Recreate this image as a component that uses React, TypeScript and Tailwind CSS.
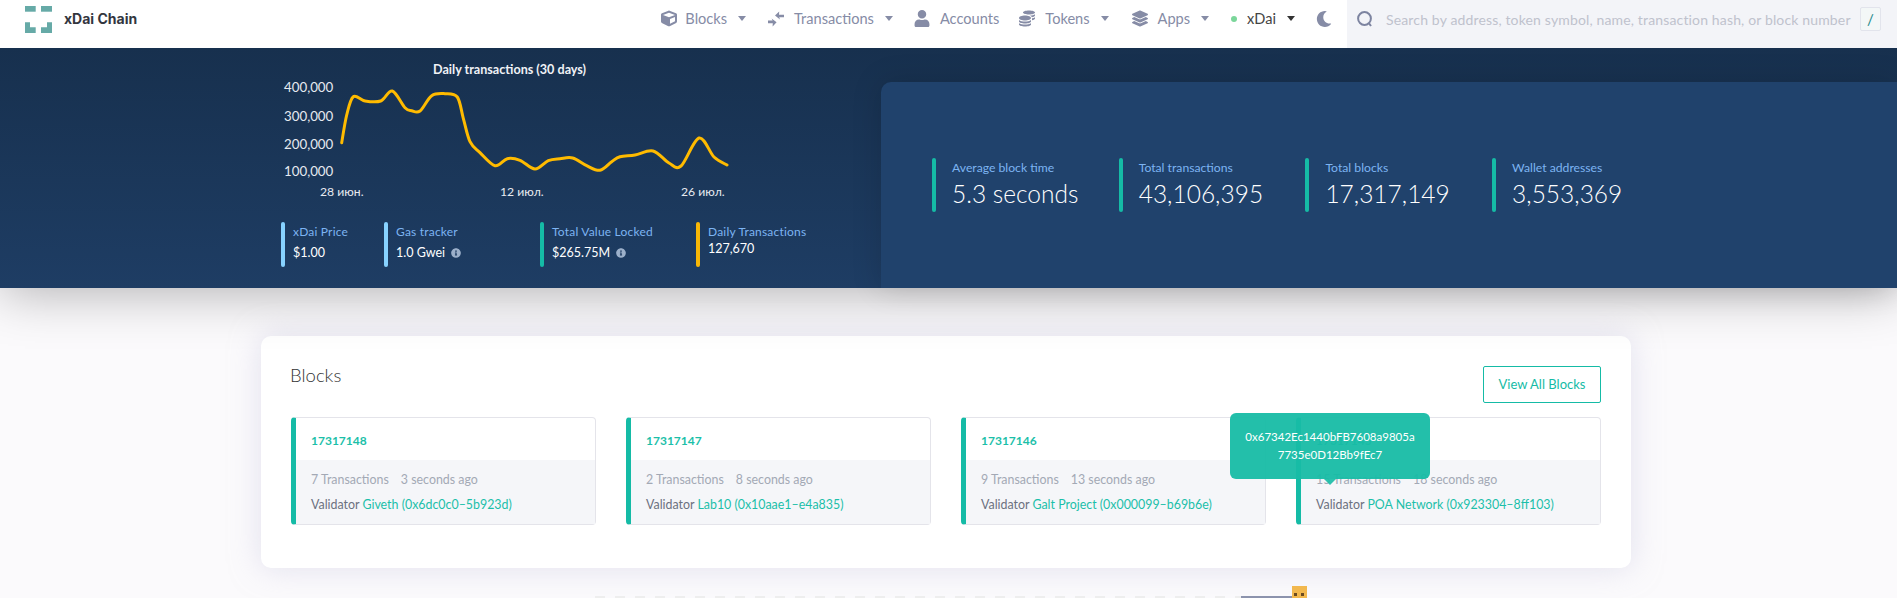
import React from 'react';
import { FaCube, FaUser, FaCoins, FaLayerGroup, FaMoon, FaInfoCircle } from 'react-icons/fa';

const chartPoints: [number, number][] = [
  [341.7, 142.7], [346.7, 115], [353.3, 96.7], [365, 101], [380.7, 101], [392.3, 91], [405, 107.7],
  [411.7, 110.7], [420, 111], [431.7, 95.7], [445, 93.7], [457.3, 97], [463.3, 118.3], [470, 141.7],
  [480, 152.7], [495, 165.7], [507.3, 158.7], [520, 160.3], [535, 169], [548.3, 160.7], [560, 158.7],
  [572.7, 158], [586.7, 165.7], [600, 170.3], [611.7, 161.7], [620, 156.7], [635, 155], [653, 151],
  [669, 163], [681, 166], [699, 138], [714, 157], [727, 165],
];

function smoothPath(pts: [number, number][]) {
  let d = `M${pts[0][0]} ${pts[0][1]}`;
  for (let i = 0; i < pts.length - 1; i++) {
    const p0 = pts[i - 1] || pts[i];
    const p1 = pts[i];
    const p2 = pts[i + 1];
    const p3 = pts[i + 2] || p2;
    const c1x = p1[0] + (p2[0] - p0[0]) / 6;
    const c1y = p1[1] + (p2[1] - p0[1]) / 6;
    const c2x = p2[0] - (p3[0] - p1[0]) / 6;
    const c2y = p2[1] - (p3[1] - p1[1]) / 6;
    d += ` C${c1x} ${c1y} ${c2x} ${c2y} ${p2[0]} ${p2[1]}`;
  }
  return d;
}

function Caret({ dark }: { dark?: boolean }) {
  return (
    <span className={`inline-block w-0 h-0 border-x-[4px] border-x-transparent border-t-[5px] ${dark ? 'border-t-[#333]' : 'border-t-[#868ca6]'}`} />
  );
}

function TransferIcon() {
  return (
    <svg viewBox="0 0 16 16" className="w-[16px] h-[16px]" fill="#868ca6">
      <path d="M0 9.6h4.6L3.6 7.4l5 3.8-4 4.2.2-3.1H0z" />
      <path d="M16 6.2h-4.8l.8 2.2-5-3.8L11.2.6 11 3.7h5z" />
    </svg>
  );
}

function NavItem({ icon, label, caret, className }: { icon: React.ReactNode; label: string; caret?: boolean; className?: string }) {
  return (
    <div className={`flex items-center ${className || ''}`}>
      {icon}
      <span className="ml-[10px] text-[14.6px] text-[#868ca6]">{label}</span>
      {caret && <span className="ml-[11px] flex"><Caret /></span>}
    </div>
  );
}

function Logo() {
  return (
    <svg viewBox="0 0 27 27" className="w-[27px] h-[27px]" fill="#66aaa7">
      <rect x="0" y="0" width="10.7" height="5.7" />
      <rect x="16" y="0" width="11" height="5.7" />
      <path d="M0 16.3h5v5h5.7v5.7H0z" />
      <path d="M27 16.3h-5v5h-6v5.7h11z" />
    </svg>
  );
}

function Tile({ color, label, value, info, raise, className }: { color: string; label: string; value: string; info?: boolean; raise?: boolean; className: string }) {
  return (
    <div className={`flex h-[45px] ${className}`}>
      <div className={`w-[4px] rounded-sm ${color}`} />
      <div className="ml-[8px]">
        <div className="text-[12px] leading-[20px] text-[#7db4f2] tracking-[0.2px]">{label}</div>
        <div className={`${raise ? 'mt-[-3px]' : 'mt-[1px]'} flex items-center text-[12.5px] leading-[20px] text-white`}>
          {value}
          {info && <FaInfoCircle className="ml-[6px] w-[10px] h-[10px] text-[#9cb0ca]" />}
        </div>
      </div>
    </div>
  );
}

function Stat({ label, value }: { label: string; value: string }) {
  return (
    <div className="flex w-[186.7px] h-[54px] shrink-0">
      <div className="w-[4px] rounded-sm bg-[#15bba6]" />
      <div className="ml-[16px]">
        <div className="text-[12.2px] leading-[18px] mt-[1px] text-[#7db4f2]">{label}</div>
        <div className="mt-[2px] text-[24.5px] leading-[30px] font-light text-white">{value}</div>
      </div>
    </div>
  );
}

const blocks = [
  { n: '17317148', tx: '7 Transactions', age: '3 seconds ago', v: 'Giveth (0x6dc0c0–5b923d)' },
  { n: '17317147', tx: '2 Transactions', age: '8 seconds ago', v: 'Lab10 (0x10aae1–e4a835)' },
  { n: '17317146', tx: '9 Transactions', age: '13 seconds ago', v: 'Galt Project (0x000099–b69b6e)' },
  { n: '17317145', tx: '15 Transactions', age: '18 seconds ago', v: 'POA Network (0x923304–8ff103)' },
];

function BlockCard({ block, tooltip }: { block: (typeof blocks)[number]; tooltip?: boolean }) {
  return (
    <div className="relative w-[305px] h-[108px] rounded-[4px] border border-[#e4e4ea] border-l-[5px] border-l-[#15bba6]">
      <div className="h-[42px] pl-[15px] pt-[4px] flex items-center text-[12px] font-bold text-[#1cbfa9]">{block.n}</div>
      <div className="h-[64px] bg-[#f5f6f9] pl-[15px] pt-[10px] text-[12.4px]">
        <div className="leading-[20px] text-[#a3a9b5]">
          <span>{block.tx}</span>
          <span className="ml-[12px]">{block.age}</span>
        </div>
        <div className="mt-[5px] leading-[20px] text-[#6c7180]">
          Validator <span className="text-[#1cbfa9]">{block.v}</span>
        </div>
      </div>
      {tooltip && (
        <div className="absolute left-[-71px] top-[-5px] w-[200px] h-[66px] rounded-[6px] bg-[#17bca5]/95 flex items-center justify-center text-center text-[11.5px] leading-[18px] text-white">
          <div>0x67342Ec1440bFB7608a9805a<br />7735e0D12Bb9fEc7</div>
          <span className="absolute left-[94px] top-[66px] w-0 h-0 border-x-[6px] border-x-transparent border-t-[6px] border-t-[#17bca5]/90" />
        </div>
      )}
    </div>
  );
}

export default function App() {
  return (
    <div className="h-[598px] overflow-hidden bg-[#fbfafc] font-['Lato',sans-serif]">
      <header className="relative z-10 h-[48px] bg-white flex items-center">
        <div className="ml-[25px] mt-[-9px] flex items-center">
          <Logo />
          <span className="ml-[12px] mt-[-3px] text-[14px] font-bold font-['Inter',sans-serif] text-[#33363f]">xDai Chain</span>
        </div>
        <nav className="ml-auto flex items-center mt-[-10px]">
          <NavItem icon={<FaCube className="w-[16px] h-[17px] mr-[-2px] text-[#868ca6]" />} label="Blocks" caret />
          <NavItem icon={<TransferIcon />} label="Transactions" caret className="ml-[22px]" />
          <NavItem icon={<FaUser className="w-[16px] h-[17px] text-[#868ca6]" />} label="Accounts" className="ml-[21px]" />
          <NavItem icon={<FaCoins className="w-[16px] h-[17px] text-[#868ca6]" />} label="Tokens" caret className="ml-[20px]" />
          <NavItem icon={<FaLayerGroup className="w-[16px] h-[17px] text-[#868ca6]" />} label="Apps" caret className="ml-[23px]" />
          <div className="ml-[22px] flex items-center">
            <span className="w-[6px] h-[6px] rounded-full bg-[#7bd69a]" />
            <span className="ml-[10px] text-[14.6px] text-[#444]">xDai</span>
            <span className="ml-[11px] flex"><Caret dark /></span>
          </div>
          <FaMoon className="ml-[21px] w-[16px] h-[16px] text-[#868ca6]" />
        </nav>
        <div className="ml-[15px] w-[550px] h-full bg-[#f3f4f8] flex items-center pl-[10px] pb-[10px]">
          <svg viewBox="0 0 16 16" className="w-[16px] h-[16px]" fill="none" stroke="#7d84a0" strokeWidth="2">
            <circle cx="7.5" cy="7.5" r="6.4" />
            <path d="M11.8 12l2.2 3" />
          </svg>
          <span className="ml-[13px] text-[14px] text-[#bfc2cd] tracking-[0.15px] whitespace-nowrap">Search by address, token symbol, name, transaction hash, or block number</span>
          <span className="absolute left-[1860px] top-[7px] w-[21px] h-[24px] flex items-center justify-center rounded-[2px] border border-[#e2e4ec] bg-[#f3f7f7] text-[15px] text-[#1f8a8a]">/</span>
        </div>
      </header>

      <section className="h-[240px] flex bg-gradient-to-b from-[#17304e] to-[#1e3d64] shadow-[0_4px_50px_rgba(0,0,0,0.3)] relative">
        <div className="w-[881px] shrink-0 pl-[275px] pt-[2px]">
          <svg viewBox="275 50 460 152" className="w-[460px] h-[152px] block">
            <text x="433" y="74" fontSize="12.6" fontWeight="700" fill="#f0f2f6">Daily transactions (30 days)</text>
            <text x="284" y="92" fontSize="13.3" fill="#e6eaf0">400,000</text>
            <text x="284" y="121" fontSize="13.3" fill="#e6eaf0">300,000</text>
            <text x="284" y="149" fontSize="13.3" fill="#e6eaf0">200,000</text>
            <text x="284" y="176" fontSize="13.3" fill="#e6eaf0">100,000</text>
            <text x="320" y="196" fontSize="12.2" fill="#e6eaf0">28 июн.</text>
            <text x="500" y="196" fontSize="12.2" fill="#e6eaf0">12 июл.</text>
            <text x="681" y="196" fontSize="12.2" fill="#e6eaf0">26 июл.</text>
            <path d={smoothPath(chartPoints)} fill="none" stroke="#ffbb00" strokeWidth="3" strokeLinecap="round" />
          </svg>
          <div className="mt-[20px] ml-[6px] flex">
            <Tile color="bg-[#87d2ff]" label="xDai Price" value="$1.00" className="w-[103px]" />
            <Tile color="bg-[#87d2ff]" label="Gas tracker" value="1.0 Gwei" info className="w-[156px]" />
            <Tile color="bg-[#15bba6]" label="Total Value Locked" value="$265.75M" info className="w-[156px]" />
            <Tile color="bg-[#f8b706]" label="Daily Transactions" value="127,670" raise className="w-[160px]" />
          </div>
        </div>
        <div className="flex-1 mt-[34px] rounded-tl-[10px] bg-[#20426c] shadow-[0_0_30px_rgba(0,0,0,0.15)] pl-[51px] flex items-center">
          <Stat label="Average block time" value="5.3 seconds" />
          <Stat label="Total transactions" value="43,106,395" />
          <Stat label="Total blocks" value="17,317,149" />
          <Stat label="Wallet addresses" value="3,553,369" />
        </div>
      </section>

      <main className="pt-[48px] pl-[261px]">
        <div className="w-[1370px] h-[232px] rounded-[10px] bg-white shadow-[0_0_30px_rgba(202,199,226,0.5)] px-[30px] pt-[29px]">
          <div className="flex justify-between">
            <h2 className="ml-[-1px] text-[18.5px] leading-[20px] text-[#333] font-light">Blocks</h2>
            <button className="mt-[1px] w-[118px] h-[37px] border border-[#15bba6] rounded-[2px] text-[13px] text-[#15bba6]">View All Blocks</button>
          </div>
          <div className="mt-[14px] flex gap-[30px]">
            {blocks.map((b, i) => (
              <BlockCard key={b.n} block={b} tooltip={i === 3} />
            ))}
          </div>
        </div>
        <div className="mt-[18px] ml-[334px] flex items-end h-[12px]">
          <div className="w-[646px] h-[2px] bg-[repeating-linear-gradient(90deg,#eeeeee_0_10px,transparent_10px_20px)]" />
          <div className="w-[51px] h-[2px] bg-[#8c93ad]" />
          <div className="relative w-[15px] h-[12px] bg-[#f2b84e]">
            <span className="absolute left-[2px] top-[7px] w-[3px] h-[3px] bg-[#6b4a1f]" />
            <span className="absolute left-[9px] top-[7px] w-[3px] h-[3px] bg-[#6b4a1f]" />
          </div>
        </div>
      </main>
    </div>
  );
}
